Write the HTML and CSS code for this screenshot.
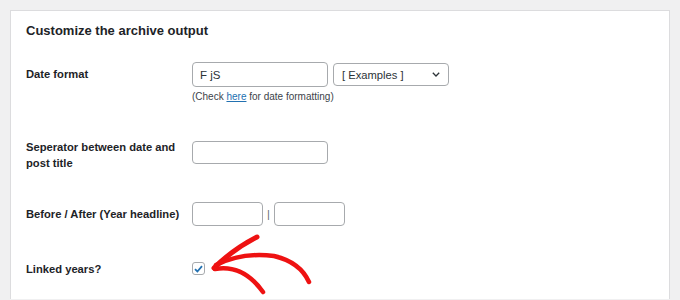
FILE: index.html
```html
<!DOCTYPE html>
<html>
<head>
<meta charset="utf-8">
<link rel="stylesheet" href="styles.css">
</head>
<body>
<div class="panel">
  <h2 class="title">Customize the archive output</h2>
  <div class="row row-date">
    <div class="label">Date format</div>
    <div class="field">
      <div class="inline">
        <input class="text text-date" type="text" value="F jS">
        <div class="select"><span>[ Examples ]</span>
          <svg class="chev" width="8" height="5" viewBox="0 0 8 5"><path d="M0.8 0.8 L4 4 L7.2 0.8" fill="none" stroke="#2c3338" stroke-width="1.3"/></svg>
        </div>
      </div>
      <div class="hint">(Check <a href="#">here</a> for date formatting)</div>
    </div>
  </div>
  <div class="row row-sep">
    <div class="label">Seperator between date and post title</div>
    <div class="field">
      <input class="text text-sep" type="text">
    </div>
  </div>
  <div class="row row-ba">
    <div class="label">Before / After (Year headline)</div>
    <div class="field">
      <div class="inline">
        <input class="text text-small" type="text">
        <span class="pipe">|</span>
        <input class="text text-small" type="text">
      </div>
    </div>
  </div>
  <div class="row row-link">
    <div class="label">Linked years?</div>
    <div class="field">
      <span class="check"><svg width="9" height="8" viewBox="0 0 9 8"><path d="M1 4.2 L3.4 6.5 L8 1.2" fill="none" stroke="#2271b1" stroke-width="1.8"/></svg></span>
    </div>
  </div>
</div>
<svg class="arrow" width="680" height="300" viewBox="0 0 680 300">
  <g fill="none" stroke="#ee1212" stroke-linecap="round" stroke-linejoin="round">
    <path d="M214 268 Q232 250 257 237" stroke-width="5"/>
    <path d="M216 265 Q242 252 274 256 Q300 262 309 282" stroke-width="4.5"/>
    <path d="M215 269 Q243 264 263 292" stroke-width="4.5"/>
  </g>
</svg>
</body>
</html>
```

FILE: styles.css
```css
html, body {
  margin: 0;
  padding: 0;
  background: #f0f0f1;
  font-family: "Liberation Sans", Arial, sans-serif;
  color: #1d2327;
  height: 300px;
  overflow: hidden;
}
.panel {
  margin: 10px 10px 0 10px;
  background: #fff;
  border: 1px solid #dcdcde;
  border-bottom: none;
  padding: 12px 16px 22px 15px;
}
.title {
  margin: 0;
  font-size: 13px;
  line-height: 16px;
  font-weight: bold;
}
.row {
  display: grid;
  grid-template-columns: 155px 1fr;
  column-gap: 11px;
  align-items: start;
}
.label {
  font-size: 11.2px;
  font-weight: bold;
  line-height: 16px;
}
.row-date { margin-top: 23px; }
.row-date .label { padding-top: 4px; }
.row-sep { margin-top: 35px; }
.row-sep .text-sep { margin-top: 2px; }
.row-ba { margin-top: 31px; }
.row-ba .label { padding-top: 4px; }
.row-link { margin-top: 35px; }
.row-link .check { margin-top: 1px; }
.inline {
  display: flex;
  align-items: center;
}
.text {
  box-sizing: border-box;
  height: 24px;
  border: 1px solid #a7aaad;
  border-radius: 4px;
  background: #fff;
  font-family: "Liberation Sans", Arial, sans-serif;
  font-size: 11.5px;
  color: #2c3338;
  padding: 0 7px;
  margin: 0;
  outline: none;
  display: block;
}
.text-date { width: 136px; height: 25px; }
.text-sep { width: 136px; height: 23px; }
.text-small { width: 71px; }
.select {
  box-sizing: border-box;
  margin-left: 5px;
  width: 116px;
  height: 23px;
  border: 1px solid #a7aaad;
  border-radius: 4px;
  display: flex;
  align-items: center;
  justify-content: space-between;
  padding: 0 8px 0 8px;
  font-size: 11.2px;
  color: #2c3338;
}
.chev { display: block; }
.hint {
  margin-top: 3px;
  font-size: 10px;
  line-height: 14px;
  color: #3c434a;
}
.hint a { color: #2271b1; text-decoration: underline; }
.pipe {
  font-size: 11px;
  color: #646970;
  width: 11px;
  text-align: center;
}
.check {
  box-sizing: border-box;
  display: flex;
  align-items: center;
  justify-content: center;
  width: 13px;
  height: 13px;
  border: 1px solid #a7aaad;
  border-radius: 3px;
  background: #fff;
}
.check svg { display: block; }
.arrow {
  position: absolute;
  left: 0;
  top: 0;
  pointer-events: none;
}
```
